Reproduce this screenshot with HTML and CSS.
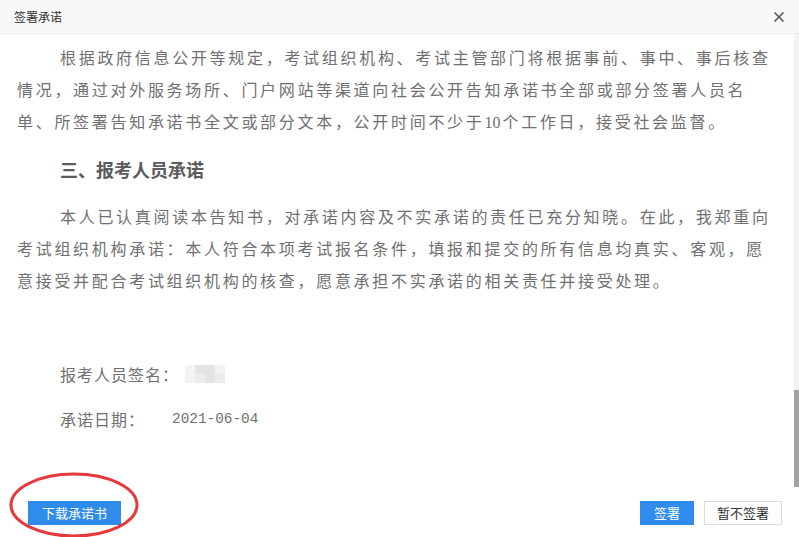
FILE: index.html
```html
<!DOCTYPE html>
<html lang="zh-CN">
<head>
  <meta charset="UTF-8">
  <meta name="viewport" content="width=device-width, initial-scale=1.0">
  <title>签署承诺</title>
  <link rel="stylesheet" href="styles.css">
</head>
<body>
  <div class="dialog">
    <div class="dialog-head">
      <span class="dialog-title">签署承诺</span>
      <svg class="dialog-close" width="12" height="12" viewBox="0 0 12 12">
        <path d="M1.5 1.5 L10.5 10.5 M10.5 1.5 L1.5 10.5" stroke="#555" stroke-width="1.6" fill="none"/>
      </svg>
    </div>

    <div class="dialog-main">
      <div class="dialog-content">
        <p class="para">根据政府信息公开等规定，考试组织机构、考试主管部门将根据事前、事中、事后核查情况，通过对外服务场所、门户网站等渠道向社会公开告知承诺书全部或部分签署人员名单、所签署告知承诺书全文或部分文本，公开时间不少于<span class="num">10</span>个工作日，接受社会监督。</p>

        <h3 class="section-title">三、报考人员承诺</h3>

        <p class="para">本人已认真阅读本告知书，对承诺内容及不实承诺的责任已充分知晓。在此，我郑重向考试组织机构承诺：本人符合本项考试报名条件，填报和提交的所有信息均真实、客观，愿意接受并配合考试组织机构的核查，愿意承担不实承诺的相关责任并接受处理。</p>

        <div class="sign-row sign-name">
          <span class="sign-label">报考人员签名：</span>
          <span class="blur-name">
            <i class="b1"></i><i class="b2"></i><i class="b2"></i><i class="b1"></i>
            <i class="b1"></i><i class="b3"></i><i class="b2"></i><i class="b3"></i>
          </span>
        </div>
        <div class="sign-row">
          <span class="sign-label">承诺日期：</span>
          <span class="sign-date">2021-06-04</span>
        </div>
      </div>

      <!-- 滚动条 -->
      <div class="scroll-track">
        <div class="scroll-thumb"></div>
      </div>
    </div>

    <div class="dialog-foot">
      <button class="btn btn-primary">下载承诺书</button>
      <div class="foot-right">
        <button class="btn btn-primary">签署</button>
        <button class="btn btn-default">暂不签署</button>
      </div>
    </div>
  </div>

  <!-- 红色圈注 -->
  <svg class="mark-circle" width="134" height="68" viewBox="0 0 134 68">
    <ellipse cx="66" cy="34" rx="63" ry="31" fill="none" stroke="#e5393b" stroke-width="3"/>
  </svg>
</body>
</html>
```

FILE: styles.css
```css
* {
  box-sizing: border-box;
}
body {
  margin: 0;
  background: white;
  font-family: "Noto Sans CJK SC", "Noto Sans", sans-serif;
}
.dialog {
  width: 799px;
  height: 537px;
  display: flex;
  flex-direction: column;
  overflow: hidden;
}
.dialog-head {
  height: 34px;
  flex: none;
  display: flex;
  align-items: center;
  justify-content: space-between;
  padding: 0 14px;
  background: #f8f8f8;
  border-bottom: 1px solid #ebebeb;
}
.dialog-title {
  font-size: 12px;
  color: #333;
}
.dialog-main {
  height: 453px;
  flex: none;
  display: flex;
  overflow: hidden;
}
.dialog-content {
  flex: 1;
  padding: 7px 0 0 17px;
  color: #707070;
}
.para {
  margin: 0;
  width: 759px;
  font-size: 16px;
  line-height: 32px;
  letter-spacing: 2.7px;
  text-indent: 43px;
}
.num {
  font-family: "Liberation Serif", serif;
  font-size: 16px;
  letter-spacing: 0;
  margin-right: 2px;
}
.section-title {
  margin: 14px 0 15px 43px;
  font-size: 18px;
  line-height: 32px;
  font-weight: bold;
  color: #5c5c5c;
}
.sign-row {
  display: flex;
  align-items: center;
  height: 32px;
  padding-left: 43px;
  font-size: 16px;
  margin-top: 13px;
}
.sign-name {
  margin-top: 62px;
}
.sign-label {
  letter-spacing: 1px;
}
.blur-name {
  display: grid;
  grid-template-columns: repeat(4, 10px);
  grid-auto-rows: 9px;
  margin-left: 6px;
}
.blur-name i {
  display: block;
}
.b1 { background: #f3f3f3; }
.b2 { background: #e4e4e4; }
.b3 { background: #ececec; }
.sign-date {
  margin-left: 27px;
  font-family: "Liberation Mono", monospace;
  font-size: 14.4px;
}
.scroll-track {
  width: 5px;
  flex: none;
  display: flex;
  flex-direction: column;
  justify-content: flex-end;
  background: #f3f3f3;
}
.scroll-thumb {
  height: 97px;
  background: #a3a3a3;
}
.dialog-foot {
  flex: 1;
  display: flex;
  justify-content: space-between;
  align-items: flex-start;
  padding: 14px 17px 0 28px;
}
.foot-right {
  display: flex;
  gap: 10px;
}
.btn {
  height: 24px;
  padding: 0 13px;
  font-family: "Noto Sans CJK SC", sans-serif;
  font-size: 13px;
  line-height: 22px;
  border: 1px solid transparent;
  cursor: pointer;
}
.btn-primary {
  background: #2f8ced;
  border-color: #2f8ced;
  color: white;
}
.btn-default {
  background: white;
  border-color: #dcdcdc;
  color: #333;
  padding: 0 12px;
}
.mark-circle {
  position: absolute;
  left: 8px;
  top: 471px;
}
```
